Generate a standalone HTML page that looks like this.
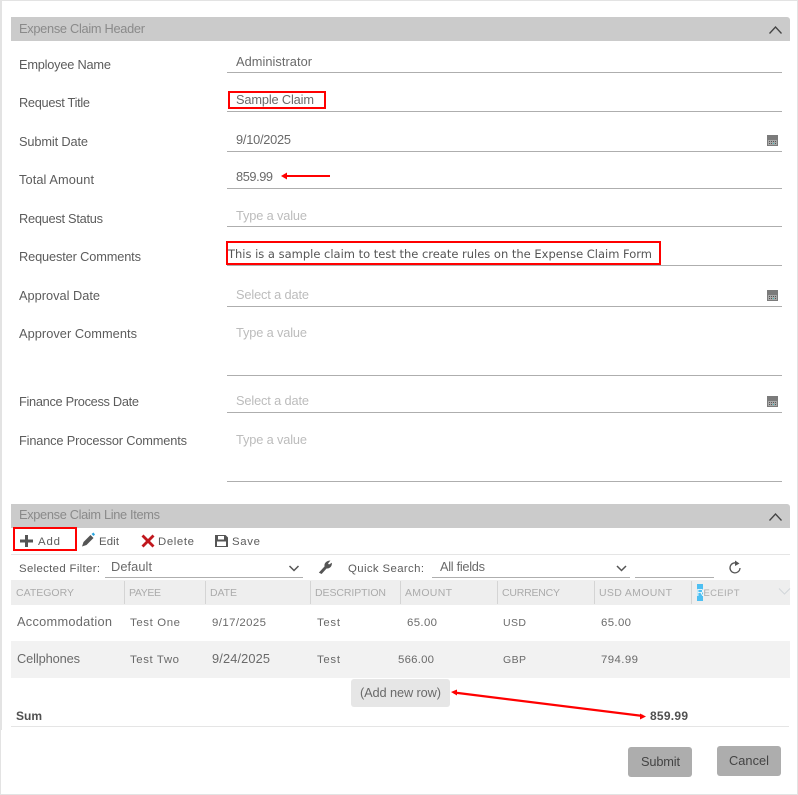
<!DOCTYPE html>
<html><head><meta charset="utf-8"><title>Expense Claim</title>
<style>
html,body{margin:0;padding:0;background:#fff;width:798px;height:795px;overflow:hidden}
svg{display:block}
text{font-family:"Liberation Sans",sans-serif;font-size:12.8px;fill:#666;white-space:pre}
.l{fill:#5c5c5c}
.v{fill:#6a6a6a}
.p{fill:#bcbcbc}
.h{fill:#8a8a8a}
.c{fill:#ababab;font-size:10.5px}
.s{font-size:11.4px}
.b{font-weight:bold;fill:#505050;font-size:12px}
</style></head><body>
<svg width="798" height="795" viewBox="0 0 798 795" xmlns="http://www.w3.org/2000/svg">
<rect width="798" height="795" fill="#fff"/>
<!-- outer borders -->
<rect x="0" y="0" width="798" height="1" fill="#e3e3e3"/>
<rect x="0" y="0" width="2" height="730" fill="#e3e3e3"/>
<rect x="0" y="730" width="1" height="65" fill="#e3e3e3"/>
<rect x="797" y="0" width="1" height="795" fill="#e3e3e3"/>
<rect x="0" y="794" width="798" height="1" fill="#e3e3e3"/>

<!-- header bar -->
<path d="M11 17H787a3 3 0 0 1 3 3V41H11Z" fill="#cbcbcb"/>
<text x="19" y="33" class="h" textLength="126">Expense Claim Header</text>
<path d="M769.5 33.5L775.5 27L781.5 33.5" fill="none" stroke="#444" stroke-width="1.3"/>

<!-- labels -->
<text x="19" y="69" class="l" textLength="92">Employee Name</text>
<text x="19" y="107" class="l" textLength="71">Request Title</text>
<text x="19" y="146" class="l" textLength="69">Submit Date</text>
<text x="19" y="184" class="l" textLength="75">Total Amount</text>
<text x="19" y="223" class="l" textLength="84">Request Status</text>
<text x="19" y="261" class="l" textLength="122">Requester Comments</text>
<text x="19" y="300" class="l" textLength="81">Approval Date</text>
<text x="19" y="338" class="l" textLength="118">Approver Comments</text>
<text x="19" y="406" class="l" textLength="120">Finance Process Date</text>
<text x="19" y="445" class="l" textLength="168">Finance Processor Comments</text>

<!-- input lines -->
<g fill="#aeaeae">
<rect x="227" y="72" width="555" height="1"/>
<rect x="227" y="111" width="555" height="1"/>
<rect x="227" y="151" width="555" height="1"/>
<rect x="227" y="188" width="555" height="1"/>
<rect x="227" y="226" width="555" height="1"/>
<rect x="227" y="265" width="555" height="1"/>
<rect x="227" y="306" width="555" height="1"/>
<rect x="227" y="375" width="555" height="1"/>
<rect x="227" y="412" width="555" height="1"/>
<rect x="227" y="481" width="555" height="1"/>
</g>

<!-- values -->
<text x="236" y="66" class="v" textLength="76">Administrator</text>
<text x="236" y="104" class="v" textLength="78">Sample Claim</text>
<rect x="229" y="92" width="96" height="16" fill="none" stroke="#f00" stroke-width="2"/>
<text x="236" y="144" class="v" textLength="55">9/10/2025</text>
<text x="236" y="181" class="v" textLength="37">859.99</text>
<rect x="285" y="175" width="45" height="2" fill="#f00"/>
<path d="M281 176L287 172.500V179.500Z" fill="#f00"/>
<text x="236" y="220" class="p" textLength="71">Type a value</text>
<rect x="227" y="242" width="433" height="22" fill="none" stroke="#f00" stroke-width="2"/>
<text x="228" y="258" textLength="424" style="font-family:'DejaVu Sans',sans-serif;font-size:11.5px;fill:#555">This is a sample claim to test the create rules on the Expense Claim Form</text>
<text x="236" y="299" class="p" textLength="73">Select a date</text>
<text x="236" y="337" class="p" textLength="71">Type a value</text>
<text x="236" y="405" class="p" textLength="73">Select a date</text>
<text x="236" y="444" class="p" textLength="71">Type a value</text>

<!-- calendar icons -->
<g id="cal">
<rect x="767" y="135" width="11" height="11" fill="#7b7b7b"/>
<rect x="768" y="140" width="9" height="5" fill="#a9a9a9"/>
<path d="M769 141h1v1h-1zM771 141h1v1h-1zM773 141h1v1h-1zM775 141h1v1h-1zM769 143h1v1h-1zM771 143h1v1h-1zM775 143h1v1h-1z" fill="#555"/>
<path d="M773 143h1v1h-1z" fill="#3bb"/>
</g>
<g transform="translate(0,155)">
<rect x="767" y="135" width="11" height="11" fill="#7b7b7b"/>
<rect x="768" y="140" width="9" height="5" fill="#a9a9a9"/>
<path d="M769 141h1v1h-1zM771 141h1v1h-1zM773 141h1v1h-1zM775 141h1v1h-1zM769 143h1v1h-1zM771 143h1v1h-1zM775 143h1v1h-1z" fill="#555"/>
<path d="M773 143h1v1h-1z" fill="#3bb"/>
</g>
<g transform="translate(0,261)">
<rect x="767" y="135" width="11" height="11" fill="#7b7b7b"/>
<rect x="768" y="140" width="9" height="5" fill="#a9a9a9"/>
<path d="M769 141h1v1h-1zM771 141h1v1h-1zM773 141h1v1h-1zM775 141h1v1h-1zM769 143h1v1h-1zM771 143h1v1h-1zM775 143h1v1h-1z" fill="#555"/>
<path d="M773 143h1v1h-1z" fill="#3bb"/>
</g>

<!-- line items bar -->
<path d="M11 504H787a3 3 0 0 1 3 3V528H11Z" fill="#cbcbcb"/>
<text x="19" y="519" class="h" textLength="141">Expense Claim Line Items</text>
<path d="M769.5 520.5L775.5 514L781.5 520.5" fill="none" stroke="#444" stroke-width="1.3"/>

<!-- toolbar -->
<rect x="14" y="528" width="62" height="22" fill="none" stroke="#f00" stroke-width="2"/>
<path d="M25 535h3v4.5h5v3h-5V547h-3v-4.5h-5v-3h5Z" fill="#555"/>
<text x="38" y="545" class="l s" textLength="22">Add</text>
<path d="M82 546.5l1.5-4.5 7-7 3 3-7 7Z" fill="#555"/>
<path d="M91.5 534l2-1.500 1.500 2-1.500 1.500Z" fill="#2aa6e0"/>
<text x="99" y="545" class="l s" textLength="20">Edit</text>
<path d="M141.500 537.500l2-2 4.500 4.500 4.500-4.500 2 2-4.500 4.500 4.500 4.500-2 2-4.500-4.500-4.500 4.500-2-2 4.500-4.500Z" fill="#c1171d" transform="translate(0,-1)"/>
<text x="158" y="545" class="l s" textLength="36">Delete</text>
<path d="M215 535h10.500l2.500 2.500V547h-13Z" fill="#555"/>
<rect x="218" y="536" width="6" height="3.500" fill="#fff"/>
<rect x="217" y="541.500" width="9" height="4.500" fill="#fff"/>
<text x="232" y="545" class="l s" textLength="28">Save</text>
<rect x="11" y="554" width="779" height="1" fill="#e5e5e5"/>

<!-- filter row -->
<text x="19" y="572" class="l s" textLength="81">Selected Filter:</text>
<text x="111" y="571" class="v" textLength="41">Default</text>
<rect x="105" y="577" width="198" height="1" fill="#aeaeae"/>
<path d="M289.500 566l4.500 4.500 4.500-4.500" fill="none" stroke="#555" stroke-width="1.500"/>
<path d="M319.500 572.500l5.500-6c-.7-2.500 1-5 4.500-5.500l-2 2.500 1.500 1.500 2.500-1.500c0 3-2.500 5-5 4.500l-5 5.500Z" fill="#555" stroke="#555" stroke-width=".8"/>
<text x="348" y="572" class="l s" textLength="76">Quick Search:</text>
<text x="440" y="571" class="v" textLength="45">All fields</text>
<rect x="432" y="577" width="198" height="1" fill="#aeaeae"/>
<path d="M617 566l4.500 4.500 4.500-4.500" fill="none" stroke="#555" stroke-width="1.500"/>
<rect x="635" y="577" width="79" height="1" fill="#aeaeae"/>
<path d="M737.500 563.500A5 5 0 1 0 740 568" fill="none" stroke="#555" stroke-width="1.300"/>
<path d="M735 560.500l4.500 3-4.500 2.500Z" fill="#555"/>

<!-- grid header -->
<rect x="11" y="580" width="779" height="25" fill="#eeeeee"/>
<g fill="#d4d4d4">
<rect x="124" y="581" width="1" height="23"/>
<rect x="205" y="581" width="1" height="23"/>
<rect x="310" y="581" width="1" height="23"/>
<rect x="400" y="581" width="1" height="23"/>
<rect x="497" y="581" width="1" height="23"/>
<rect x="594" y="581" width="1" height="23"/>
<rect x="691" y="581" width="1" height="23"/>
</g>
<text x="16" y="596" class="c" textLength="58">CATEGORY</text>
<text x="129" y="596" class="c" textLength="32">PAYEE</text>
<text x="210" y="596" class="c" textLength="27">DATE</text>
<text x="315" y="596" class="c" textLength="71">DESCRIPTION</text>
<text x="405" y="596" class="c" textLength="47">AMOUNT</text>
<text x="502" y="596" class="c" textLength="58">CURRENCY</text>
<text x="599" y="596" class="c" textLength="73">USD AMOUNT</text>
<rect x="697" y="584" width="6" height="17" fill="#4dbff2"/>
<text x="696.500" y="596" class="c" style="fill:#fff">R</text>
<text x="703.500" y="596" class="c" textLength="36" style="font-size:9.5px">ECEIPT</text>
<path d="M779 588.500l5.500 5.500 5.500-5.500" fill="none" stroke="#d2d6da" stroke-width="1"/>

<!-- rows -->
<rect x="11" y="641" width="779" height="37" fill="#f2f2f2"/>
<text x="17" y="626" class="v" textLength="95">Accommodation</text>
<text x="130" y="626" class="v s" textLength="50">Test One</text>
<text x="212" y="626" class="v s" textLength="54">9/17/2025</text>
<text x="317" y="626" class="v s" textLength="23">Test</text>
<text x="407" y="626" class="v s" textLength="30">65.00</text>
<text x="503" y="626" class="v" style="font-size:10.500px" textLength="23">USD</text>
<text x="601" y="626" class="v s" textLength="30">65.00</text>
<text x="17" y="663" class="v" textLength="63">Cellphones</text>
<text x="130" y="663" class="v s" textLength="49">Test Two</text>
<text x="212" y="663" class="v" textLength="58">9/24/2025</text>
<text x="317" y="663" class="v s" textLength="23">Test</text>
<text x="398" y="663" class="v s" textLength="36">566.00</text>
<text x="503" y="663" class="v" style="font-size:10.500px" textLength="23">GBP</text>
<text x="601" y="663" class="v s" textLength="37">794.99</text>

<!-- add new row -->
<rect x="351" y="679" width="99" height="28" rx="3" fill="#e6e6e6"/>
<text x="360" y="697" class="v" textLength="81">(Add new row)</text>
<path d="M454 692.500L643 716" stroke="#f00" stroke-width="2.200"/>
<path d="M451 692L457 689.500V695.500Z" fill="#f00"/>
<path d="M646 716.500L640 713.500V719.500Z" fill="#f00"/>

<!-- sum -->
<text x="16" y="720" class="b" textLength="26">Sum</text>
<text x="650" y="720" class="b" textLength="38">859.99</text>
<rect x="11" y="726" width="778" height="1" fill="#e5e5e5"/>

<!-- buttons -->
<rect x="628" y="747" width="64" height="30" rx="3" fill="#adadad"/>
<text x="641" y="766" style="fill:#444" textLength="39">Submit</text>
<rect x="717" y="746" width="64" height="30" rx="3" fill="#adadad"/>
<text x="729" y="765" style="fill:#444" textLength="40">Cancel</text>
</svg>
</body></html>
